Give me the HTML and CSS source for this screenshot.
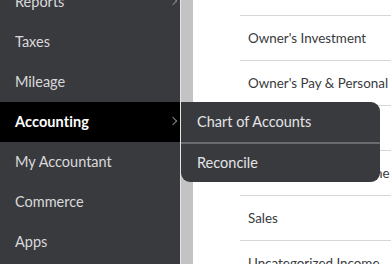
FILE: index.html
```html
<!DOCTYPE html>
<html>
<head>
<meta charset="utf-8" />
<title>Accounting menu</title>
<link rel="stylesheet" href="styles.css">
</head>
<body>
<div class="app">
	<ul class="nav">
		<li class="more">Reports<span class="chev"></span></li>
		<li>Taxes</li>
		<li>Mileage</li>
		<li class="on more">Accounting<span class="chev"></span></li>
		<li>My Accountant</li>
		<li>Commerce</li>
		<li>Apps</li>
	</ul>
	<div class="edge"></div>
	<div class="main">
		<ul class="accts">
			<li>Owner's Investment</li>
			<li>Owner's Pay &amp; Personal Expenses</li>
			<li>Retained Earnings</li>
			<li>Billable Expense Income</li>
			<li>Sales</li>
			<li>Uncategorized Income</li>
		</ul>
	</div>
	<ul class="flyout">
		<li>Chart of Accounts</li>
		<li>Reconcile</li>
	</ul>
</div>
</body>
</html>
```

FILE: styles.css
```css
*{margin:0;padding:0;}
body{background:#fff;font-family:Lato,"Noto Sans",sans-serif;}
li{list-style:none;}
.app{
	display:flex;
	position:relative;
	width:391px;
	height:264px;
	overflow:hidden;
}
.nav{
	width:180px;
	flex:none;
	background:#393a3e;
	border-right:1px solid #e6e6e6;
	margin-top:-18px;
	height:282px;
}
.nav li{
	position:relative;
	height:40px;
	line-height:40px;
	padding-left:15px;
	font-size:14.5px;
	color:#d9d9db;
}
.nav .on{
	background:#000;
	color:#fff;
	font-weight:bold;
	letter-spacing:0.1px;
}
.chev{
	position:absolute;
	right:4px;
	top:16px;
	width:5px;
	height:5px;
	border-top:1.5px solid #85868a;
	border-right:1.5px solid #85868a;
	transform:rotate(45deg);
}
.edge{
	width:12px;
	flex:none;
	background:#c3c3c3;
}
.main{
	flex:1;
	min-width:0;
	padding:15px 0 0 47px;
}
.accts li{
	height:44px;
	line-height:44px;
	border-top:1px solid #d6d6d6;
	padding-left:8px;
	font-size:13.4px;
	color:#393a3e;
	white-space:nowrap;
	overflow:hidden;
}
.flyout{
	position:absolute;
	left:181px;
	top:102px;
	width:199px;
	background:#393a3e;
	border-radius:0 9px 9px 9px;
}
.flyout li{
	height:40px;
	line-height:40px;
	padding-left:16px;
	font-size:14.5px;
	color:#e4e4e6;
}
.flyout li + li{border-top:2px solid #6a6b6f;height:38px;line-height:38px;}
```
